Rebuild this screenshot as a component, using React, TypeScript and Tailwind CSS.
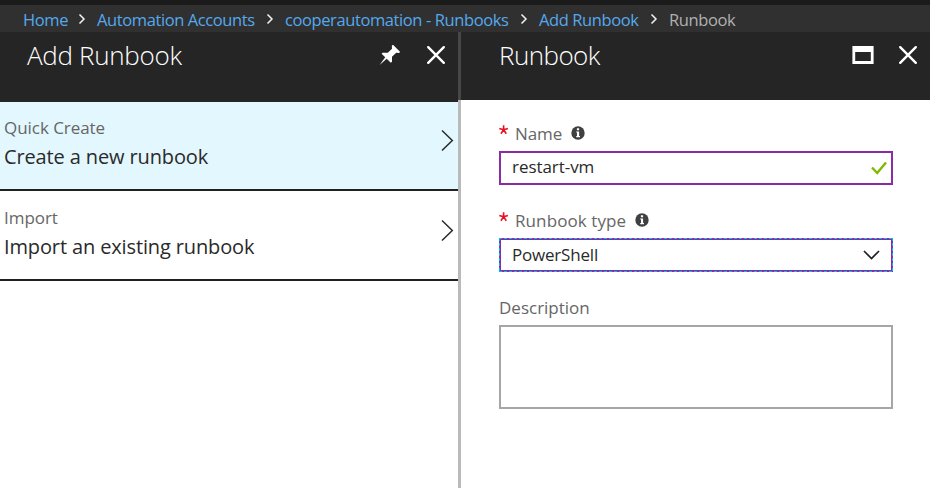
import React from "react";

const crumbs = [
  { label: "Home", box: "w-[74px]" },
  { label: "Automation Accounts", box: "w-[188px]" },
  { label: "cooperautomation - Runbooks", box: "w-[254px]" },
  { label: "Add Runbook", box: "w-[130px]" },
];

function CrumbChevron() {
  return (
    <svg className="mr-[11px] h-[12px] w-[8px] shrink-0" viewBox="0 0 8 12" fill="none" stroke="#f2f2f2" strokeWidth="1.5">
      <path d="M1.5 1.5 6 6 1.5 10.5" />
    </svg>
  );
}

function CloseIcon() {
  return (
    <svg className="h-[20px] w-[20px] shrink-0" viewBox="0 0 20 20" fill="none" stroke="#fff" strokeWidth="2.4" strokeLinecap="round">
      <path d="m2.2 2.2 15.6 15.6M17.8 2.2 2.2 17.8" />
    </svg>
  );
}

function PinIcon() {
  return (
    <svg className="-mt-px h-[22px] w-[22px] shrink-0" viewBox="0 0 22 22" fill="#fff">
      <path d="M14 .8 21 7.8 20.2 9 17.2 8.8 13 12.8 13 17.8 11.8 18.8 7.7 14.8.6 21 6.2 13.3 2.6 9.7 3.6 8.8 8.8 8.8 13 4.7 12.8 1.8Z" />
    </svg>
  );
}

function WindowIcon() {
  return (
    <svg className="h-[18px] w-[22px] shrink-0" viewBox="0 0 22 18">
      <path fill="#fff" fillRule="evenodd" d="M.4 0h21.2v18H.4ZM3.2 6v9h15.6V6Z" />
    </svg>
  );
}

function InfoIcon() {
  return (
    <svg className="h-[14px] w-[14px] shrink-0" viewBox="0 0 14 14">
      <circle cx="7" cy="7" r="6.7" fill="#404040" />
      <path fill="#fff" d="M5.9 2.3h2.2v2H5.9ZM5.2 5.4h2.9v4.7h.9v1.2H5.2v-1.2h.8V6.6h-.8Z" />
    </svg>
  );
}

function RequiredMark() {
  return (
    <svg className="h-[10px] w-[10px] shrink-0" viewBox="0 0 10 10" stroke="#e81123" strokeWidth="1.6">
      <path d="M4.6 4.8V.3M4.6 4.8.3 3.5M4.6 4.8l4.3-1.3M4.6 4.8 1.9 8.7M4.6 4.8l2.7 3.9" />
    </svg>
  );
}

function Option({ kind, title, box, chevron }: { kind: string; title: string; box: string; chevron: string }) {
  return (
    <button className={"flex w-full items-start justify-between border-b-2 border-[#202020] pl-[4px] pr-[4px] text-left " + box}>
      <span className="block">
        <span className="block h-[26px] text-[17px] leading-[24px] tracking-[-0.05px] text-[#666]">{kind}</span>
        <span className="block text-[20px] leading-[30px] tracking-[-0.13px] text-[#2a2a2a]">{title}</span>
      </span>
      <svg className={"h-[23px] w-[13px] " + chevron} viewBox="0 0 13 23" fill="none" stroke="#2a2a2a" strokeWidth="1.5">
        <path d="M1 1.5 11.3 11.5 1 21.5" />
      </svg>
    </button>
  );
}

export default function App() {
  return (
    <div className="flex h-[488px] w-[930px] flex-col overflow-hidden bg-white font-['Open_Sans','Noto_Sans',sans-serif]">
      <div className="h-[5px] shrink-0 bg-[#1b1b1b]" />
      <nav className="flex h-[27px] shrink-0 items-center bg-[#303030] pl-[23px] text-[16.5px] leading-[25px] tracking-[-0.4px] text-[#55a9ee]">
        {crumbs.map((c) => (
          <div key={c.label} className={"flex shrink-0 items-center justify-between whitespace-nowrap " + c.box}>
            <a className="pt-[2px]">{c.label}</a>
            <CrumbChevron />
          </div>
        ))}
        <span className="pt-[2px] text-[#b0b0b0]">Runbook</span>
      </nav>
      <div className="flex min-h-0 flex-1">
        <section className="w-[458px] shrink-0">
          <header className="flex h-[70px] items-start bg-[#252525] pl-[27px] pr-[12px] text-white">
            <h1 className="mt-[5px] flex-1 whitespace-nowrap text-[26px] font-light leading-[36px] tracking-[-0.3px]">Add Runbook</h1>
            <div className="mt-[13px] flex gap-[25px]">
              <PinIcon />
              <CloseIcon />
            </div>
          </header>
          <Option kind="Quick Create" title="Create a new runbook" box="h-[89px] bg-[#e3f7fe] pt-[14px]" chevron="mt-[13px]" />
          <Option kind="Import" title="Import an existing runbook" box="h-[90px] bg-white pt-[15px]" chevron="mt-[13px]" />
        </section>
        <div className="flex w-[3px] shrink-0 flex-col">
          <div className="h-[68px] bg-[#474747]" />
          <div className="flex-1 bg-[#bababa]" />
        </div>
        <section className="min-w-0 flex-1">
          <header className="flex h-[68px] items-start bg-[#252525] pl-[38px] pr-[12px] text-white">
            <h1 className="mt-[5px] flex-1 whitespace-nowrap text-[26px] font-light leading-[36px] tracking-[-0.55px]">Runbook</h1>
            <div className="mt-[13px] flex items-center gap-[24px]">
              <WindowIcon />
              <CloseIcon />
            </div>
          </header>
          <form className="flex flex-col pl-[38px] pr-[37px] pt-[20px] text-[17px]">
            <div className="flex h-[31px] items-start">
              <div className="mt-[5px]"><RequiredMark /></div>
              <label className="ml-[6px] mt-px leading-[26px] tracking-[-0.1px] text-[#666]">Name</label>
              <div className="ml-[9px] mt-[6px]"><InfoIcon /></div>
            </div>
            <div className="flex h-[34px] items-center border-2 border-[#8a2da5] pl-[11px] pr-[4px]">
              <span className="flex-1 pb-[2px] text-[17px] leading-[26px] tracking-[-0.05px] text-[#2a2a2a]">restart-vm</span>
              <svg className="h-[14px] w-[16px]" viewBox="0 0 16 14" fill="none" stroke="#7fba00" strokeWidth="2.4">
                <path d="M1 6.5 6.2 12 15 1.5" />
              </svg>
            </div>
            <div className="flex h-[53px] items-start pt-[22px]">
              <div className="mt-[5px]"><RequiredMark /></div>
              <label className="ml-[6px] mt-px leading-[26px] tracking-[0.1px] text-[#666]">Runbook type</label>
              <div className="ml-[9px] mt-[6px]"><InfoIcon /></div>
            </div>
            <div className="relative flex h-[34px] items-center border-2 border-[#8a2da5] pl-[11px] pr-[11px]">
              <svg className="pointer-events-none absolute -left-[2px] -top-[2px] h-[34px] w-[394px]" viewBox="0 0 394 34" fill="none" shapeRendering="crispEdges">
                <path d="M0 .5h394M.5 0v34M393.5 0v34M0 33.5h394" stroke="#00bcf2" strokeDasharray="3 2" />
              </svg>
              <span className="flex-1 text-[17px] leading-[28px] tracking-[-0.2px] text-[#2a2a2a]">PowerShell</span>
              <svg className="h-[10px] w-[17px]" viewBox="0 0 17 10" fill="none" stroke="#202020" strokeWidth="1.7">
                <path d="M1 1 8.5 8.5 16 1" />
              </svg>
            </div>
            <label className="h-[53px] pt-[23px] leading-[26px] tracking-[0px] text-[#666]">Description</label>
            <div className="h-[84px] border-2 border-[#a6a6a6]" />
          </form>
        </section>
      </div>
    </div>
  );
}
